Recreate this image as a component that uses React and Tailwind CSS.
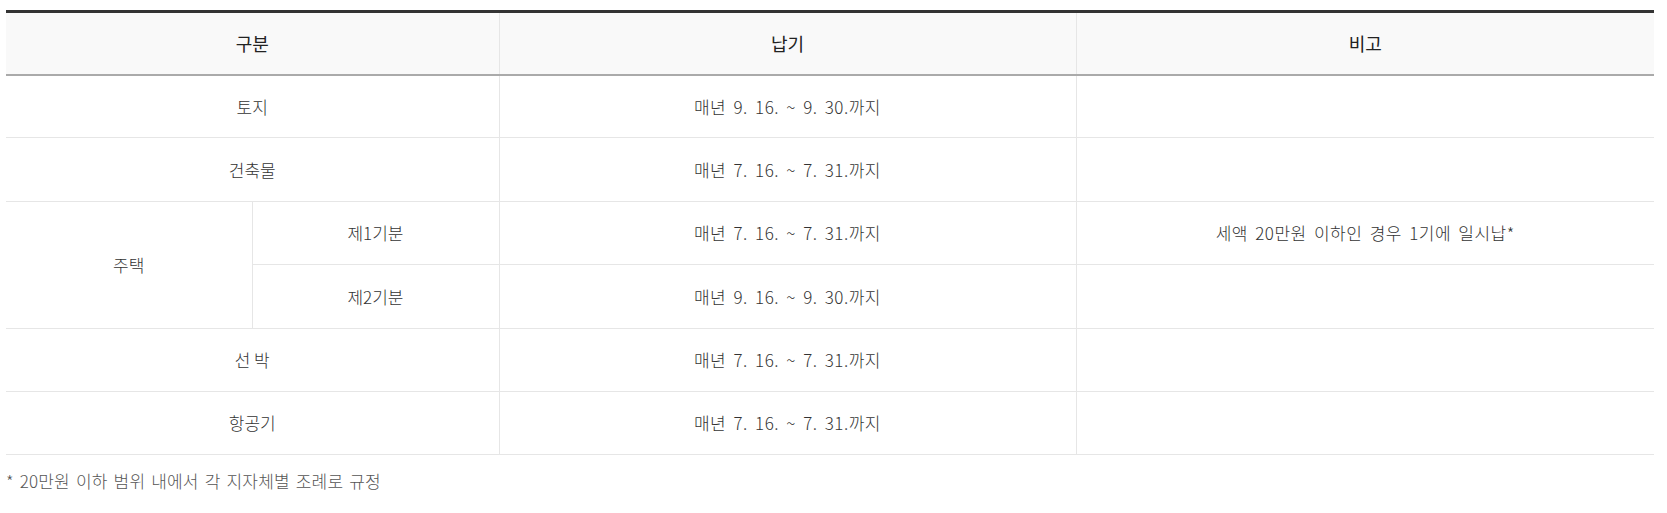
import React from 'react'

const rows = [
  { label: '토지', due: '매년 9. 16. ~ 9. 30.까지' },
  { label: '건축물', due: '매년 7. 16. ~ 7. 31.까지' },
]

const tail = [
  { label: '선 박', due: '매년 7. 16. ~ 7. 31.까지' },
  { label: '항공기', due: '매년 7. 16. ~ 7. 31.까지' },
]

const td = 'h-[63.4px] border-b border-r border-[#e6e6e6] text-center align-middle p-0'
const tdLast = 'h-[63.4px] border-b border-[#e6e6e6] text-center align-middle p-0'
const wide = 'tracking-[0.5px] [word-spacing:3px]'

export default function App() {
  return (
    <div
      className="bg-white px-[6px] pt-[10px] text-[#333]"
      style={{ fontFamily: '"Noto Sans CJK KR", "Noto Sans", sans-serif' }}
    >
      <table className="w-[1648px] table-fixed border-collapse border-t-[3px] border-[#333] text-[17px] font-light">
        <colgroup>
          <col className="w-[246px]" />
          <col className="w-[247px]" />
          <col className="w-[577px]" />
          <col className="w-[578px]" />
        </colgroup>
        <thead>
          <tr className="bg-[#f9f9f9]">
            <th colSpan={2} className="h-[63px] border-b-2 border-r border-b-[#aaa] border-r-[#e6e6e6] text-[18px] font-normal text-[#222]">
              구분
            </th>
            <th className="border-b-2 border-r border-b-[#aaa] border-r-[#e6e6e6] text-[18px] font-normal text-[#222]">납기</th>
            <th className="border-b-2 border-b-[#aaa] text-[18px] font-normal text-[#222]">비고</th>
          </tr>
        </thead>
        <tbody>
          {rows.map((r) => (
            <tr key={r.label}>
              <td colSpan={2} className={td}>{r.label}</td>
              <td className={`${td} ${wide}`}>{r.due}</td>
              <td className={tdLast}></td>
            </tr>
          ))}
          <tr>
            <td rowSpan={2} className={td}>주택</td>
            <td className={td}>제1기분</td>
            <td className={`${td} ${wide}`}>매년 7. 16. ~ 7. 31.까지</td>
            <td className={`${tdLast} ${wide}`}>세액 20만원 이하인 경우 1기에 일시납*</td>
          </tr>
          <tr>
            <td className={td}>제2기분</td>
            <td className={`${td} ${wide}`}>매년 9. 16. ~ 9. 30.까지</td>
            <td className={tdLast}></td>
          </tr>
          {tail.map((r) => (
            <tr key={r.label}>
              <td colSpan={2} className={td}>{r.label}</td>
              <td className={`${td} ${wide}`}>{r.due}</td>
              <td className={tdLast}></td>
            </tr>
          ))}
        </tbody>
      </table>
      <p className="pt-[13px] text-[17px] font-light text-[#555] tracking-[0.2px] [word-spacing:2px]">
        * 20만원 이하 범위 내에서 각 지자체별 조례로 규정
      </p>
    </div>
  )
}
